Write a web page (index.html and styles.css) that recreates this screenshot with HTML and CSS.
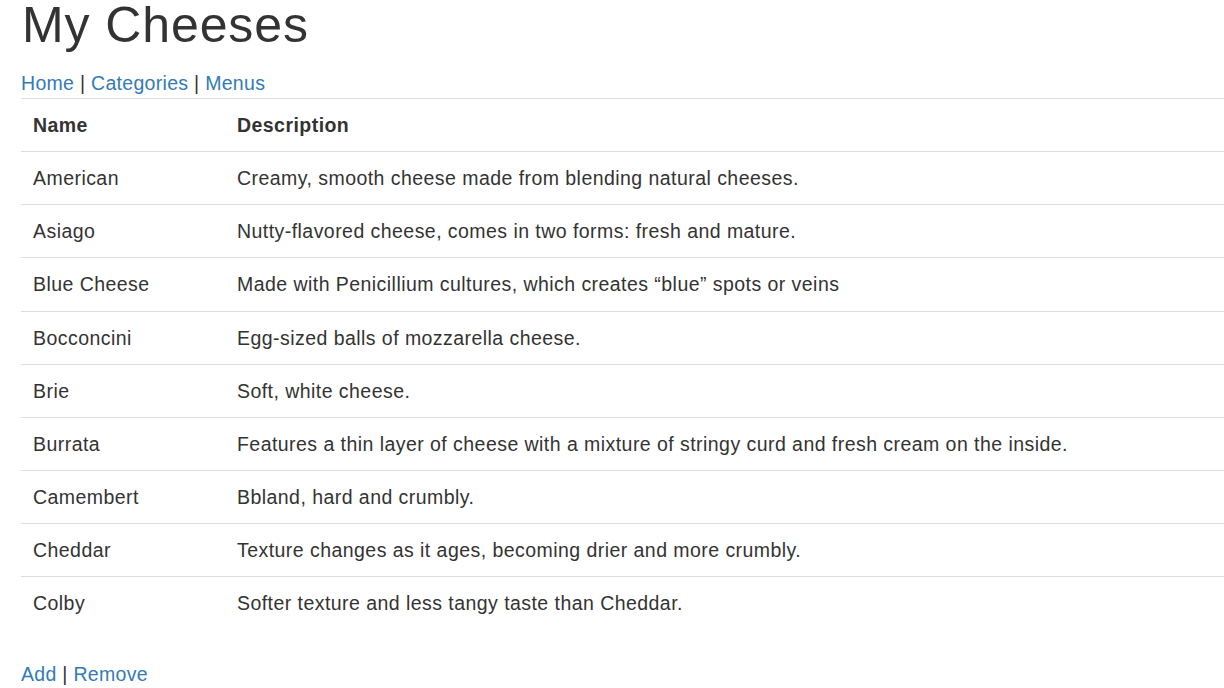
FILE: index.html
```html
<!DOCTYPE html>
<html lang="en">
<head>
<meta charset="utf-8">
<title>My Cheeses</title>
<link rel="stylesheet" href="styles.css">
</head>
<body>
<div class="container">
  <h1 class="title">My Cheeses</h1>
  <nav class="nav"><a href="#">Home</a> | <a href="#">Categories</a> | <a href="#">Menus</a></nav>
  <table class="cheese-table">
    <thead>
      <tr><th class="col-name">Name</th><th>Description</th></tr>
    </thead>
    <tbody>
      <tr><td>American</td><td>Creamy, smooth cheese made from blending natural cheeses.</td></tr>
      <tr><td>Asiago</td><td>Nutty-flavored cheese, comes in two forms: fresh and mature.</td></tr>
      <tr><td>Blue Cheese</td><td>Made with Penicillium cultures, which creates “blue” spots or veins</td></tr>
      <tr><td>Bocconcini</td><td>Egg-sized balls of mozzarella cheese.</td></tr>
      <tr><td>Brie</td><td>Soft, white cheese.</td></tr>
      <tr><td>Burrata</td><td>Features a thin layer of cheese with a mixture of stringy curd and fresh cream on the inside.</td></tr>
      <tr><td>Camembert</td><td>Bbland, hard and crumbly.</td></tr>
      <tr><td>Cheddar</td><td>Texture changes as it ages, becoming drier and more crumbly.</td></tr>
      <tr><td>Colby</td><td>Softer texture and less tangy taste than Cheddar.</td></tr>
    </tbody>
  </table>
  <p class="actions"><a href="#">Add</a> | <a href="#">Remove</a></p>
</div>
</body>
</html>
```

FILE: styles.css
```css
html, body {
  margin: 0;
  padding: 0;
  background: #fff;
}
body {
  font-family: "Liberation Sans", Arial, Helvetica, sans-serif;
  font-size: 19.5px;
  line-height: 28px;
  color: #333;
  overflow: hidden;
}
.container {
  padding-left: 21px;
}
.title {
  margin: 0;
  padding-left: 1px;
  font-size: 50px;
  line-height: 50px;
  font-weight: 500;
  letter-spacing: 0.9px;
  color: #333;
}
.nav {
  margin-top: 19px;
  padding-bottom: 1px;
  border-bottom: 1px solid #ddd;
  letter-spacing: 0.3px;
}
a {
  color: #337ab7;
  text-decoration: none;
}
.cheese-table {
  width: 100%;
  border-collapse: collapse;
  border-spacing: 0;
  letter-spacing: 0.45px;
}
.cheese-table th,
.cheese-table td {
  padding: 12px 12px 12.125px;
  text-align: left;
  vertical-align: top;
}
.cheese-table th {
  font-weight: bold;
  border-bottom: 1px solid #ddd;
  padding-top: 12px;
}
.cheese-table td {
  border-top: 1px solid #ddd;
}
.cheese-table tbody tr:first-child td {
  border-top: 0;
}
.col-name {
  width: 180px;
}
.actions {
  margin: 31px 0 0;
  letter-spacing: 0.3px;
}
```
